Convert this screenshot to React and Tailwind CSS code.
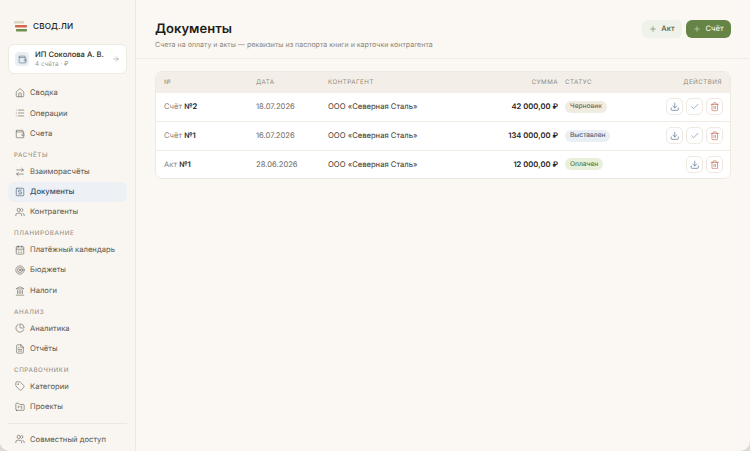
import React from 'react';
import {
  ArrowRight, Home, List, Wallet, ArrowRightLeft, Users, CalendarDays, Target, Landmark,
  ChartPie, FileText, Tag, FolderKanban, Plus, Download, Check, Trash2,
} from 'lucide-react';

const DocIcon = ({ size, strokeWidth, className }) => (
  <svg width={size} height={size} viewBox="0 0 24 24" fill="none" stroke="currentColor" strokeWidth={strokeWidth} strokeLinecap="round" strokeLinejoin="round" className={className}>
    <rect x="3" y="3" width="18" height="18" rx="2" />
    <path d="M15.5 7.5H10a2 2 0 0 0 0 4.5h4a2 2 0 0 1 0 4.5H8.5" />
  </svg>
);

const sections = [
  { items: [['Сводка', Home], ['Операции', List], ['Счета', Wallet]] },
  { title: 'Расчёты', items: [['Взаиморасчёты', ArrowRightLeft], ['Документы', DocIcon, true], ['Контрагенты', Users]] },
  { title: 'Планирование', items: [['Платёжный календарь', CalendarDays], ['Бюджеты', Target], ['Налоги', Landmark]] },
  { title: 'Анализ', items: [['Аналитика', ChartPie], ['Отчёты', FileText]] },
  { title: 'Справочники', items: [['Категории', Tag], ['Проекты', FolderKanban]] },
];

const rows = [
  { kind: 'Счёт', num: '№2', date: '18.07.2026', sum: '42 000,00 ₽', status: 'Черновик', badge: 'bg-[#f1ece2] text-[#6f675a]', check: true },
  { kind: 'Счёт', num: '№1', date: '16.07.2026', sum: '134 000,00 ₽', status: 'Выставлен', badge: 'bg-[#e9eff5] text-[#4a6582]', check: true },
  { kind: 'Акт', num: '№1', date: '28.06.2026', sum: '12 000,00 ₽', status: 'Оплачен', badge: 'bg-[#e8f0dc] text-[#55783f]', check: false },
];

const gridCols = 'grid grid-cols-[92px_72px_1fr_auto_165px] items-center pl-[8px] pr-[7px]';

const NavItem = ({ label, Icon, active }) => (
  <div className={`flex h-[20.3px] items-center gap-[5px] whitespace-nowrap rounded-[6px] px-[7px] text-[7.65px] ${active ? 'bg-[#edf1f5] font-medium text-[#35506c]' : 'text-[#5c564d]'}`}>
    <Icon size={10} strokeWidth={1.4} className="shrink-0" />
    <span>{label}</span>
  </div>
);

const ActionBtn = ({ Icon, color, border }) => (
  <div className={`flex h-[17px] w-[17px] items-center justify-center rounded-[5px] border bg-white ${border} ${color}`}>
    <Icon size={9.5} strokeWidth={1.6} />
  </div>
);

export default function App() {
  return (
    <div className="h-[451px] w-[750px] bg-[#dcdad6]">
      <div className="flex h-full w-full overflow-hidden rounded-b-[10px] bg-[#fbf8f3] font-['Inter',sans-serif] antialiased [text-rendering:geometricPrecision]">
        <aside className="flex h-full w-[136px] shrink-0 flex-col border-r border-[#ece7df] bg-[#f9f6f1] px-[8px]">
          <div className="flex h-[44px] items-center gap-[6px] pl-[6px] pt-[9px]">
            <svg width="13" height="11" viewBox="0 0 13 11">
              <rect x="0" y="0" width="10" height="2.4" rx="0.6" fill="#d6d8c0" />
              <rect x="1" y="4" width="12" height="2.4" rx="0.6" fill="#cf6a4c" />
              <rect x="2" y="8" width="11" height="2.4" rx="0.6" fill="#6f8f52" />
            </svg>
            <span className="text-[8.1px] font-medium tracking-[0.2px] text-[#23201b]">СВОД.ЛИ</span>
          </div>
          <div className="flex h-[30px] items-center rounded-[6px] border border-[#eee9e1] bg-white pl-[6px] pr-[6px]">
            <div className="flex h-[14px] w-[14px] items-center justify-center rounded-[4px] bg-[#e9eef3] text-[#4a6582]">
              <Wallet size={9} strokeWidth={1.5} />
            </div>
            <div className="ml-[6px] flex-1 whitespace-nowrap pt-[1px] leading-none">
              <div className="text-[7.6px] font-medium leading-[10px] text-[#2f2b25]">ИП Соколова А. В.</div>
              <div className="text-[6.4px] leading-[9px] text-[#a09a8e]">4 счёта · ₽</div>
            </div>
            <ArrowRight size={8} strokeWidth={1.5} className="text-[#8b857a]" />
          </div>
          <nav className="mt-[9px] flex flex-col">
            {sections.map((s, i) => (
              <div key={i} className={s.title ? 'mt-[5.5px]' : ''}>
                {s.title && (
                  <div className="flex h-[12px] items-center px-[6px] text-[6.2px] font-medium uppercase tracking-[0.6px] text-[#9a9488]">{s.title}</div>
                )}
                {s.items.map(([label, Icon, active]) => (
                  <NavItem key={label} label={label} Icon={Icon} active={active} />
                ))}
              </div>
            ))}
          </nav>
          <div className="mt-auto border-t border-[#ece7df] pb-[1.5px] pt-[5px]">
            <NavItem label="Совместный доступ" Icon={Users} />
          </div>
        </aside>

        <main className="flex min-w-0 flex-1 flex-col">
          <header className="flex h-[59px] items-start justify-between border-b border-[#f0ebe4] pl-[19px] pr-[19px] pt-[20px]">
            <div>
              <h1 className="text-[13px] font-semibold leading-[19px] text-[#1f1c18]">Документы</h1>
              <p className="mt-[1px] whitespace-nowrap text-[7.05px] leading-[10px] text-[#8b857a]">Счета на оплату и акты — реквизиты из паспорта книги и карточки контрагента</p>
            </div>
            <div className="flex gap-[4px]">
              <div className="flex h-[17.5px] w-[40px] items-center justify-center gap-[4px] rounded-[6px] bg-[#eff2e8] text-[7.6px] font-medium text-[#4f5f3f]">
                <Plus size={8} strokeWidth={1.5} />Акт
              </div>
              <div className="flex h-[17.5px] w-[45px] items-center justify-center gap-[4px] rounded-[6px] bg-[#678447] text-[7.6px] font-medium text-[#eef3e6]">
                <Plus size={8} strokeWidth={1.5} />Счёт
              </div>
            </div>
          </header>

          <section className="px-[19px] pt-[12px]">
            <div className="overflow-hidden rounded-[7px] border border-[#eee9e1] bg-white">
              <div className={`${gridCols} h-[20.5px] bg-[#f3efe8] text-[6.2px] uppercase tracking-[0.5px] text-[#8f897d]`}>
                <span>№</span>
                <span>Дата</span>
                <span>Контрагент</span>
                <span className="w-[80px] text-right">Сумма</span>
                <div className="flex justify-between pl-[7px] pr-[1px]">
                  <span>Статус</span>
                  <span>Действия</span>
                </div>
              </div>
              {rows.map((r, i) => (
                <div key={i} className={`${gridCols} h-[28.5px] text-[7.65px] ${i > 0 ? 'border-t border-[#f0ebe4]' : ''}`}>
                  <span className="text-[#8b857a]">{r.kind} <b className="font-semibold text-[#26221c]">{r.num}</b></span>
                  <span className="text-[#6f695f]">{r.date}</span>
                  <span className="whitespace-nowrap text-[#3c372f]">ООО «Северная Сталь»</span>
                  <span className="w-[80px] text-right font-semibold text-[#26221c]">{r.sum}</span>
                  <div className="flex items-center justify-between pl-[7px]">
                    <span className={`rounded-full px-[5px] py-[1.5px] text-[6.6px] font-medium leading-[9px] ${r.badge}`}>{r.status}</span>
                    <div className="flex gap-[3px]">
                      <ActionBtn Icon={Download} color="text-[#4a6582]" border="border-[#eee9e1]" />
                      {r.check && <ActionBtn Icon={Check} color="text-[#6f7f8f]" border="border-[#eee9e1]" />}
                      <ActionBtn Icon={Trash2} color="text-[#c4654f]" border="border-[#f3e6df]" />
                    </div>
                  </div>
                </div>
              ))}
            </div>
          </section>
        </main>
      </div>
    </div>
  );
}
